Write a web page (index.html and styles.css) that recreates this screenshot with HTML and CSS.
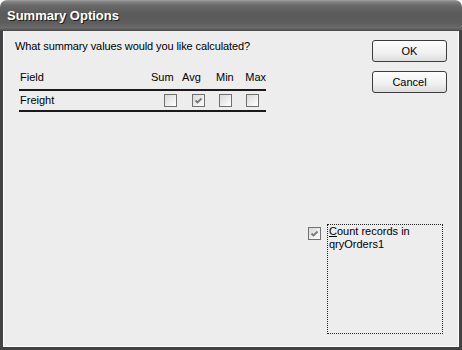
FILE: index.html
```html
<!DOCTYPE html>
<html lang="en">
<head>
  <meta charset="UTF-8" />
  <title>Summary Options</title>
  <link rel="stylesheet" href="styles.css">
</head>
<body>

  <div class="window">
    <div class="titlebar">
      <span>Summary Options</span>
    </div>

    <div class="dialog">
      <div class="main">
        <p class="question">What summary values would you like calculated?</p>

        <div class="summary-table">
          <div class="row head">
            <span class="field">Field</span>
            <span class="col sum">Sum</span>
            <span class="col avg">Avg</span>
            <span class="col min">Min</span>
            <span class="col max">Max</span>
          </div>
          <div class="row">
            <span class="field">Freight</span>
            <span class="col"><span class="check"></span></span>
            <span class="col">
              <span class="check">
                <svg width="11" height="11" viewBox="0 0 11 11"><path d="M2.5 5.5 L4.5 7.5 L8.5 3.5" fill="none" stroke="#7a7a7a" stroke-width="1.8"/></svg>
              </span>
            </span>
            <span class="col"><span class="check"></span></span>
            <span class="col"><span class="check"></span></span>
          </div>
        </div>
      </div>

      <div class="side">
        <button class="btn">OK</button>
        <button class="btn">Cancel</button>

        <div class="count-group">
          <span class="check">
            <svg width="11" height="11" viewBox="0 0 11 11"><path d="M2.5 5.5 L4.5 7.5 L8.5 3.5" fill="none" stroke="#7a7a7a" stroke-width="1.8"/></svg>
          </span>
          <div class="count-label">Count records in qryOrders1</div>
        </div>
      </div>
    </div>
  </div>

</body>
</html>
```

FILE: styles.css
```css
* {
  margin: 0;
  padding: 0;
  box-sizing: border-box;
  font-family: "Liberation Sans", Arial, sans-serif;
}

body {
  background: #fff;
  width: 462px;
  height: 350px;
  overflow: hidden;
}

.window {
  width: 462px;
  height: 350px;
  display: flex;
  flex-direction: column;
}

.titlebar {
  height: 31px;
  flex-shrink: 0;
  border-radius: 7px 7px 0 0;
  background: linear-gradient(#a2a2a2 0, #808080 2px, #676767 6px, #5a5a5a 14px, #5d5d5d 23px, #6b6b6b 28px, #474747 31px);
  padding: 6px 7px 0;
}

.titlebar span {
  color: #fff;
  font-size: 13px;
  font-weight: bold;
  line-height: 18px;
  text-shadow: 1px 1px 0 #1e1e1e;
}

.dialog {
  flex: 1;
  display: flex;
  background: #ededed;
  border: 3px solid #424242;
  border-top: none;
  box-shadow: inset 1px 0 0 #fff, inset -1px 0 0 #fff, inset 0 -1px 0 #fff;
  padding: 9px 12px 13px 12px;
}

.main {
  flex: 1;
}

.question {
  font-size: 11px;
  line-height: 13px;
  color: #000;
  letter-spacing: -0.1px;
}

.summary-table {
  margin: 18px 0 0 4px;
  width: 247px;
}

.row {
  display: grid;
  grid-template-columns: 138px 27px 28px 27px 27px;
  align-items: center;
  border-bottom: 2px solid #1a1a1a;
  font-size: 11px;
  line-height: 13px;
  color: #000;
  height: 21px;
}

.row.head {
  height: 20px;
  align-items: start;
}

.field {
  padding-left: 1px;
}

.col {
  display: flex;
  justify-content: center;
}

.head .sum { justify-content: flex-start; margin-left: -6px; }
.head .avg { justify-content: flex-start; margin-left: -2px; }
.head .min { justify-content: flex-start; margin-left: 4px; }
.head .max { justify-content: flex-end; }

.check {
  width: 13px;
  height: 13px;
  border: 1px solid #707070;
  background: linear-gradient(135deg, #d8d8d8, #f4f4f4 70%, #fff);
  display: flex;
  align-items: center;
  justify-content: center;
}

.side {
  display: flex;
  flex-direction: column;
  align-items: flex-end;
  gap: 9px;
}

.btn {
  width: 75px;
  height: 22px;
  border: 1px solid #3c3c3c;
  border-radius: 3px;
  background: linear-gradient(#fdfdfd, #f0f0f0 60%, #dcdcdc);
  font-size: 11px;
  color: #000;
}

.count-group {
  margin-top: auto;
  margin-right: 4px;
  display: flex;
  align-items: flex-start;
  gap: 6px;
}

.count-group .check {
  margin-top: 3px;
}

.count-label {
  width: 116px;
  height: 110px;
  border: 1px dotted #222;
  padding: 0 1px;
  font-size: 11px;
  line-height: 13px;
  color: #000;
}

.count-label::first-letter {
  text-decoration: underline;
}
```
